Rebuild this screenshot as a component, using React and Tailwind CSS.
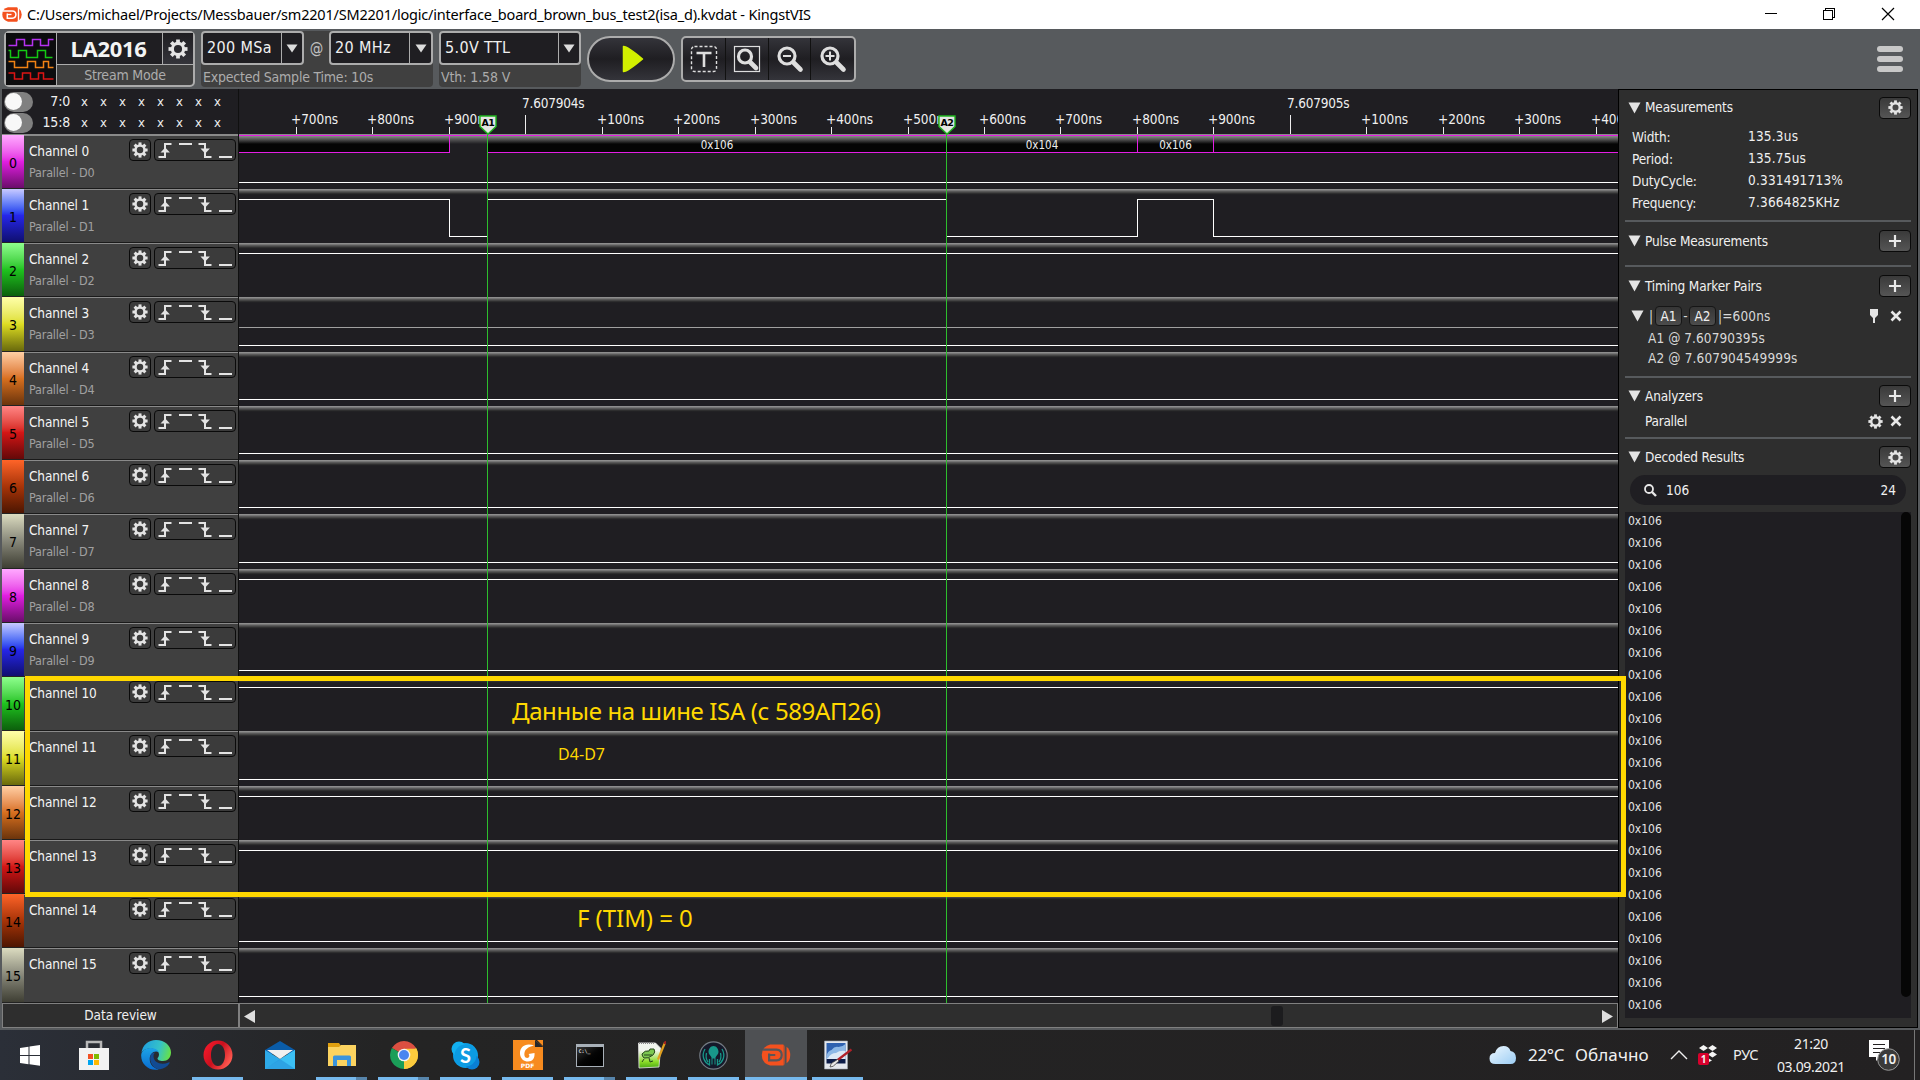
import React from "react";

const UI = "font-['DejaVu_Sans_Condensed','DejaVu_Sans',sans-serif]";

const ROWS = [
  { h: "h-[54px]", size: 54, level: "low", grad: "from-[#ffa9ff] via-[#e21ee2] to-[#6b0d6b]" },
  { h: "h-[54px]", size: 54, level: "wave", grad: "from-[#c9c9ff] via-[#2626ea] to-[#0f0f70]" },
  { h: "h-[54px]", size: 54, level: "high", grad: "from-[#8dff8d] via-[#1fc41f] to-[#0c600c]" },
  { h: "h-[55px]", size: 55, level: "mid", grad: "from-[#ffffa8] via-[#dede22] to-[#6a6a0c]" },
  { h: "h-[54px]", size: 54, level: "low", grad: "from-[#ffcfa4] via-[#d8701f] to-[#6b340c]" },
  { h: "h-[54px]", size: 54, level: "low", grad: "from-[#ff8585] via-[#d41616] to-[#640808]" },
  { h: "h-[54px]", size: 54, level: "low", grad: "from-[#ff6428] via-[#a83408] to-[#4d1602]" },
  { h: "h-[55px]", size: 55, level: "low", grad: "from-[#dcdcc0] via-[#88887a] to-[#3f3f34]" },
  { h: "h-[54px]", size: 54, level: "high", grad: "from-[#ffa9ff] via-[#e21ee2] to-[#6b0d6b]" },
  { h: "h-[54px]", size: 54, level: "low", grad: "from-[#c9c9ff] via-[#2626ea] to-[#0f0f70]" },
  { h: "h-[54px]", size: 54, level: "high", grad: "from-[#8dff8d] via-[#1fc41f] to-[#0c600c]" },
  { h: "h-[55px]", size: 55, level: "low", grad: "from-[#ffffa8] via-[#dede22] to-[#6a6a0c]" },
  { h: "h-[54px]", size: 54, level: "high", grad: "from-[#ffcfa4] via-[#d8701f] to-[#6b340c]" },
  { h: "h-[54px]", size: 54, level: "high", grad: "from-[#ff8585] via-[#d41616] to-[#640808]" },
  { h: "h-[54px]", size: 54, level: "low", grad: "from-[#ff6428] via-[#a83408] to-[#4d1602]" },
  { h: "h-[55px]", size: 55, level: "low", grad: "from-[#dcdcc0] via-[#88887a] to-[#3f3f34]" },
];

const TICKS = [
  [57, "+700ns"], [133, "+800ns"], [210, "+900ns"], [286, "7.607904s"], [363, "+100ns"], [439, "+200ns"],
  [516, "+300ns"], [592, "+400ns"], [669, "+500ns"], [745, "+600ns"], [821, "+700ns"], [898, "+800ns"],
  [974, "+900ns"], [1051, "7.607905s"], [1127, "+100ns"], [1204, "+200ns"], [1280, "+300ns"], [1357, "+400ns"],
];

function Gear({ size = 16, color = "#e4e4e4" }) {
  return (
    <svg width={size} height={size} viewBox="0 0 16 16" fill="none" stroke={color}>
      <circle cx="8" cy="8" r="4.500" strokeWidth="2.500" />
      {[0, 45, 90, 135, 180, 225, 270, 315].map((a) => (
        <path key={a} d="M8 3.2V.4" strokeWidth="3" transform={`rotate(${a} 8 8)`} />
      ))}
    </svg>
  );
}

function AppMark({ w, h, ink }) {
  return (
    <svg width={w} height={h} viewBox="0 0 20 15">
      <path d="M6 .3h9v14.400H6Q.3 13 .3 7.500T6 .3z" fill="#f4511e" />
      <path d="M15 .3q1 .7.8 2v10.400q.2 1.300-.8 2z" fill="#f4511e" />
      <path d="M1 3.900h9.300q3.600.2 3.600 3.600t-3.600 3.700H5.300V6.400" fill="none" stroke={ink} strokeWidth="1.500" />
      <path d="M5.300 7.500h4.200" stroke={ink} strokeWidth="1.300" />
      <path d="M17.200 1.800q2.500 2 2.500 5.700t-2.500 5.700z" fill="#f4511e" />
    </svg>
  );
}

function TitleBar() {
  return (
    <div className="flex h-[29px] items-center bg-white pl-[2px] text-black">
      <AppMark w={20} h={15} ink="#fff" />
      <span className="ml-[5px] grow whitespace-nowrap pt-px font-['Noto_Sans',sans-serif] text-[14.500px] tracking-[-0.210px]">
        C:/Users/michael/Projects/Messbauer/sm2201/SM2201/logic/interface_board_brown_bus_test2(isa_d).kvdat - KingstVIS
      </span>
      <svg width="160" height="29" fill="none" stroke="#000" shapeRendering="crispEdges">
        <path d="M5 13.500h12" />
        <path d="M63.500 10.500h9v9h-9zM65.500 10.500v-2h9v9h-2" />
        <path d="M122 8l12 12M134 8l-12 12" shapeRendering="auto" strokeWidth="1.200" />
      </svg>
    </div>
  );
}

function Combo({ text, className, btn }) {
  return (
    <div className={`flex h-[34px] rounded-[4px] border-2 border-[#acacac] bg-[#1f1e22] ${className}`}>
      <span className="grow self-center whitespace-nowrap pl-[4px] text-[16px] tracking-[0.350px] text-[#f0f0f0]">{text}</span>
      <span className={`flex items-center justify-center border-l border-[#acacac] ${btn}`}>
        <svg width="12" height="9"><path d="M0.500 0.500h11L6 8.500z" fill="#dcdcdc" /></svg>
      </span>
    </div>
  );
}

function Lens({ children, box }) {
  return (
    <svg width="28" height="28" viewBox="0 0 28 28" fill="none" stroke="#dedede">
      {box && <rect x="1.500" y="1.500" width="25" height="25" strokeWidth="1.200" />}
      <circle cx={box ? 12 : 11} cy={box ? 11.500 : 11} r={box ? 6.500 : 8} strokeWidth="3.200" />
      <path d={box ? "M17 17l6 6" : "M17.500 17.500l7 7"} strokeWidth="4.600" strokeLinecap="round" />
      {children}
    </svg>
  );
}

function Toolbar() {
  return (
    <div className="flex h-[60px] items-start bg-[#575a5d] pl-1 pt-[2px]">
      <div className="flex h-[56px] w-[191px] rounded-[5px] border-2 border-[#acacac] bg-[#404040]">
        <div className="w-[50px] bg-[#0c0c0e] pt-[4px]">
          <svg width="50" height="46" fill="none" strokeWidth="1.500">
            <path d="M2.500 8.500h8V2.500h8v6h8V2.500h8v6h8V2.500h5" stroke="#b432f0" />
            <path d="M2.500 13.500h2v7h8v-7h8v7h11v-7h8v7h7" stroke="#14c814" />
            <path d="M2.500 24.500h6v6h13v-6h8v6h8v-6h5v6h5" stroke="#f08214" />
            <path d="M2.500 36h6v6h8v-6h8v6h8v-6h5v6h10" stroke="#dc1414" />
          </svg>
        </div>
        <div className="flex grow flex-col border-l border-[#acacac]">
          <div className="flex h-[32px] border-b border-[#acacac] bg-[#1f1e22]">
            <span className="flex w-[105px] items-center justify-center pr-[2px] font-['Noto_Sans',sans-serif] text-[22px] font-bold tracking-[-0.300px] text-[#f4f4f4]">LA2016</span>
            <span className="flex grow items-center justify-center border-l border-[#acacac] bg-linear-to-b from-[#1f1e22] to-[#34343a]">
              <Gear size={20} />
            </span>
          </div>
          <span className="flex h-[20px] items-center justify-center pt-px text-[14px] tracking-[-0.200px] text-[#acacac]">Stream Mode</span>
        </div>
      </div>
      <div className="ml-[6px] h-[56px] w-[232px] rounded-[4px] bg-[#404040]">
        <div className="flex">
          <Combo text="200 MSa" className="w-[103px]" btn="w-[21px]" />
          <span className="w-[25px] self-center text-center text-[15px] text-[#c0c0c0]">@</span>
          <Combo text="20 MHz" className="w-[104px]" btn="w-[22px]" />
        </div>
        <div className="whitespace-nowrap pl-[2px] pt-[2px] text-[14px] tracking-[-0.220px] text-[#acacac]">Expected Sample Time: 10s</div>
      </div>
      <div className="ml-[6px] h-[56px] w-[142px] rounded-[4px] bg-[#404040]">
        <Combo text="5.0V TTL" className="w-[142px]" btn="w-[21px]" />
        <div className="pl-[2px] pt-[2px] text-[14px] tracking-[-0.100px] text-[#acacac]">Vth: 1.58 V</div>
      </div>
      <div className="ml-[6px] mt-[5px] flex h-[46px] w-[88px] items-center justify-center rounded-full border-2 border-[#acacac] bg-linear-to-b from-[#34343a] via-[#1f1e22] to-[#34343a] pl-[3px]">
        <svg width="22" height="28"><path d="M1.500 1.500Q5 1 20.500 14Q5 27 1.500 26.500z" fill="#d2f000" stroke="#d2f000" strokeWidth="1.500" strokeLinejoin="round" /></svg>
      </div>
      <div className="ml-[6px] mt-[5px] grid h-[46px] w-[175px] grid-cols-4 place-items-center rounded-[5px] border-2 border-[#acacac] bg-linear-to-b from-[#34343a] via-[#1f1e22] to-[#34343a]">
        <div className="flex h-full w-full items-center justify-center border-r border-[#111]">
          <svg width="28" height="28" fill="none" stroke="#dedede">
            <rect x="1.500" y="1.500" width="25" height="25" rx="3" strokeWidth="1.400" strokeDasharray="3 2" />
            <path d="M6.500 8h15M14 8v14" strokeWidth="2.600" />
          </svg>
        </div>
        <div className="flex h-full w-full items-center justify-center border-r border-[#111]"><Lens box /></div>
        <div className="flex h-full w-full items-center justify-center border-r border-[#111] pl-px"><Lens><path d="M7 11h8" strokeWidth="2" /></Lens></div>
        <Lens><path d="M6.500 11h9M11 6.500v9" strokeWidth="2" /></Lens>
      </div>
      <div className="ml-auto mr-[17px] mt-[15px] flex flex-col gap-1">
        <i className="h-[6px] w-[26px] rounded-full bg-[#c8c8c8]" />
        <i className="h-[6px] w-[26px] rounded-full bg-[#c8c8c8]" />
        <i className="h-[6px] w-[26px] rounded-full bg-[#c8c8c8]" />
      </div>
    </div>
  );
}

function BitRow({ label }) {
  return (
    <div className="flex h-[21px] items-center">
      <span className="flex h-[20px] w-[29px] items-center rounded-full bg-[#808080] pl-[1px]">
        <i className="size-[17px] rounded-full bg-[#f8f8f8]" />
      </span>
      <span className="w-[37px] text-right text-[14px] tracking-[-0.200px]">{label}</span>
      <span className="ml-[5px] flex">
        {Array.from({ length: 8 }, (_, i) => (
          <span key={i} className="w-[19px] pb-px text-center text-[13px] leading-none">x</span>
        ))}
      </span>
    </div>
  );
}

function EdgeButtons() {
  return (
    <div className="ml-[3px] h-[22px] w-[82px] rounded-[4px] border border-[#0a0a0a] bg-[#3b3b3b]">
      <svg width="80" height="20" fill="none" stroke="#e4e4e4" strokeWidth="2">
        <path d="M3.500 17h6.500V4h6.500" />
        <path d="M5.500 12.500l4.700-5 4.700 5z" fill="#e4e4e4" stroke="none" />
        <path d="M24 4h13" />
        <path d="M43.500 4h6.500v13h6.500" />
        <path d="M45.500 8.500l4.700 5 4.700-5z" fill="#e4e4e4" stroke="none" />
        <path d="M64 17h13" />
      </svg>
    </div>
  );
}

function ChannelRow({ i, row }) {
  return (
    <div className={`flex ${row.h}`}>
      <div className={`flex w-[22px] items-center justify-center border-b border-[#222] bg-linear-to-b pt-[3px] text-[14px] text-black ${row.grad}`}>{i}</div>
      <div className="flex grow border-b border-t border-b-[#1a1a1a] border-t-[#8a8a8a] bg-[#404040] pl-[5px]">
        <div className="w-[100px] whitespace-nowrap pt-[5px]">
          <div className="h-[22px] text-[13.500px] leading-[20px] tracking-[-0.150px] text-[#f4f4f4]">Channel {i}</div>
          {i < 10 && <div className="text-[12.500px] leading-[20px] tracking-[-0.200px] text-[#a0a0a0]">Parallel - D{i}</div>}
        </div>
        <div className="flex pt-[3px]">
          <div className="flex size-[22px] items-center justify-center rounded-[4px] border border-[#0a0a0a] bg-[#3b3b3b]"><Gear size={16} /></div>
          <EdgeButtons />
        </div>
      </div>
    </div>
  );
}

function Lane({ i, row }) {
  const low = row.size - 6.5;
  const paths = {
    low: `M0 ${low}H1380`,
    mid: `M0 ${low}H1380`,
    high: "M0 10.500H1380",
    wave: "M0 10.500H210.500V47.500H248M248 10.500H707M707 47.500H898.500V10.500H974.500V47.500H1380",
  };
  return (
    <div className={`relative ${row.h} bg-[linear-gradient(#909090_0px,#8a8a8a_1px,#606060_2px,#505050_3px,#383838_4px,#242426_5px,#1f1e22_6px)]`}>
      {i === 0 && (
        <div className="absolute inset-x-0 top-0 flex h-[18px] bg-[#1f1e22] text-[11.500px] leading-[18px] text-[#eee]">
          <span className="w-[211px] border-y border-r border-[#e41ee4] bg-[linear-gradient(#8a8a8a,#5a5a5a_3px,#050505_8px)]" />
          <span className="w-[37px] border-t border-[#e41ee4] bg-[linear-gradient(#8a8a8a,#5a5a5a_3px,#1f1e22_8px)]" />
          <span className="w-[651px] border-y border-r border-[#e41ee4] bg-[linear-gradient(#8a8a8a,#5a5a5a_3px,#050505_8px)]">
            <span className="flex">
              <span className="w-[460px] text-center">0x106</span>
              <span className="grow text-center">0x104</span>
            </span>
          </span>
          <span className="w-[76px] border-y border-r border-[#e41ee4] bg-[linear-gradient(#8a8a8a,#5a5a5a_3px,#050505_8px)] text-center">0x106</span>
          <span className="grow border-y border-[#e41ee4] bg-[linear-gradient(#8a8a8a,#5a5a5a_3px,#050505_8px)]" />
        </div>
      )}
      <svg width="1379" height={row.size} className="block" fill="none" stroke="#fff" shapeRendering="crispEdges">
        <path d={paths[row.level]} />
        {row.level === "mid" && <path d="M0 30.500H1380" stroke="#a0a0a0" />}
      </svg>
    </div>
  );
}

function Marker({ label, pos }) {
  return (
    <div className={`absolute bottom-0 top-[26px] w-[18px] ${pos}`}>
      <svg width="18" height="20" className="block">
        <path d="M1 1h16v10.500L9 19 1 11.500z" fill="#e4e4e4" stroke="#1eb41e" strokeWidth="1.400" />
      </svg>
      <span className="absolute inset-x-0 top-[1px] text-center font-['DejaVu_Sans',sans-serif] text-[9.500px] font-bold leading-[13px] tracking-[-0.500px] text-black">{label}</span>
      <div className="absolute bottom-0 left-[8px] top-[19px] w-px bg-[#2dbe2d]" />
    </div>
  );
}

function Waves() {
  return (
    <div className="relative w-[1379px] bg-[#1f1e22]">
      <div className="relative h-[46px] overflow-hidden border-b border-[#8a8a8a]">
        {TICKS.map(([x, t]) => {
          const major = t.endsWith("4s") || t.endsWith("5s");
          return (
            <div key={x} className="absolute inset-y-0 w-[80px] whitespace-nowrap text-[13.500px] leading-[18px] text-[#f0f0f0]" style={{ left: x }}>
              <span className={major ? "absolute left-[-3px] top-[5px] tracking-[-0.200px]" : "absolute left-[-5px] top-[21px] tracking-[-0.050px]"}>{t}</span>
              <i className={major ? "absolute bottom-0 left-0 h-[19px] w-px bg-[#eee]" : "absolute bottom-0 left-0 h-[7px] w-px bg-[#eee]"} />
            </div>
          );
        })}
      </div>
      {ROWS.map((r, i) => <Lane key={i} i={i} row={r} />)}
      <Marker label="A1" pos="left-[240px]" />
      <Marker label="A2" pos="left-[699px]" />
    </div>
  );
}

const Plus = () => (
  <svg width="14" height="14"><path d="M7 1v12M1 7h12" stroke="#e8e8e8" strokeWidth="2.200" /></svg>
);
const Cross = () => (
  <svg width="12" height="12"><path d="M1.500 1.500l9 9M10.500 1.500l-9 9" stroke="#e8e8e8" strokeWidth="2.600" /></svg>
);

function Head({ title, gear, h }) {
  return (
    <div className={`flex items-center pl-[3px] ${h}`}>
      <svg width="13" height="12"><path d="M.5.5h12l-6 11z" fill="#e4e4e4" /></svg>
      <span className="grow pl-[4px] text-[13.500px] tracking-[-0.150px] text-[#f0f0f0]">{title}</span>
      <span className="flex h-[22px] w-[32px] items-center justify-center rounded-[4px] border border-[#0a0a0a] bg-linear-to-b from-[#3a3a3a] to-[#555]">
        {gear ? <Gear size={15} /> : <Plus />}
      </span>
    </div>
  );
}

const Rule = () => <div className="h-[2px] shrink-0 bg-[#575a5d]" />;

function Chip({ children }) {
  return <span className="flex h-[20px] w-[27px] items-center justify-center rounded-[4px] border border-[#161616] bg-linear-to-b from-[#363636] to-[#4c4c4c] text-[#f0f0f0]">{children}</span>;
}

function SidePanel() {
  return (
    <div className="flex h-[939px] w-[300px] flex-col border border-black bg-[#2e2e2e] pl-[6px] pr-[6px] text-[13.500px] text-[#f0f0f0]">
      <Head title="Measurements" gear h="h-[35px]" />
      <div className="flex h-[95px] flex-col pl-[7px]">
        {[["Width:", "135.3us"], ["Period:", "135.75us"], ["DutyCycle:", "0.331491713%"], ["Frequency:", "7.3664825KHz"]].map(([a, b]) => (
          <div key={a} className="flex h-[22px] items-center">
            <span className="w-[116px] pt-[2px] tracking-[-0.150px]">{a}</span>
            <span className="tracking-[0.200px]">{b}</span>
          </div>
        ))}
      </div>
      <Rule />
      <div className="h-[43px]"><Head title="Pulse Measurements" h="h-[38px]" /></div>
      <Rule />
      <div className="h-[109px] text-[#d8d8d8]">
        <Head title="Timing Marker Pairs" h="h-[38px]" />
        <div className="flex h-[22px] items-center pl-[6px]">
          <svg width="13" height="12"><path d="M.5.5h12l-6 11z" fill="#e4e4e4" /></svg>
          <span className="w-[5px]" /><span className="w-[6px]">|</span>
          <Chip>A1</Chip><span className="w-[7px] text-center">-</span><Chip>A2</Chip>
          <span className="grow pl-[2px] tracking-[0.150px]">|=600ns</span>
          <svg width="10" height="14" className="mr-[11px]"><path d="M1 0h8v6L6 9v5H4V9L1 6z" fill="#e4e4e4" /></svg>
          <span className="pr-[9px]"><Cross /></span>
        </div>
        <div className="flex h-[22px] items-center pl-[23px] tracking-[0.080px]">A1 @ 7.60790395s</div>
        <div className="flex h-[19px] items-center pl-[23px] tracking-[0.150px]">A2 @ 7.607904549999s</div>
      </div>
      <Rule />
      <div className="h-[59px]">
        <Head title="Analyzers" h="h-[36px]" />
        <div className="flex h-[14px] items-center pl-[20px]">
          <span className="grow tracking-[-0.250px]">Parallel</span>
          <Gear size={15} /><span className="pl-[7px] pr-[9px]"><Cross /></span>
        </div>
      </div>
      <Rule />
      <Head title="Decoded Results" gear h="h-[36px]" />
      <div className="ml-[5px] mr-[5px] flex h-[30px] items-center rounded-full bg-[#1f1e22] pl-[14px] pr-[10px]">
        <svg width="13" height="13" fill="none" stroke="#e8e8e8"><circle cx="5" cy="5" r="4" strokeWidth="1.800" /><path d="M8 8l4 4" strokeWidth="2.400" /></svg>
        <span className="grow pl-[9px] pt-px">106</span><span>24</span>
      </div>
      <div className="mt-[7px] flex h-[506px] justify-between overflow-hidden bg-[#1f1e22] pl-[3px]">
        <div className="-mt-[2px] text-[12px] leading-[22px] text-[#e4e4e4]">
          {Array.from({ length: 23 }, (_, i) => <div key={i} className="h-[22px]">0x106</div>)}
        </div>
        <i className="h-[485px] w-[10px] rounded-full bg-[#060606]" />
      </div>
    </div>
  );
}

const ICONS = {
  store: (
    <svg width="30" height="30"><path d="M8 9V2h14v7" fill="none" stroke="#b8b8b8" strokeWidth="2.500" /><path d="M0 8h30v22H0z" fill="#f2f2f2" />
      <path d="M9 14h5v5H9z" fill="#f25022" /><path d="M15 14h5v5h-5z" fill="#7fba00" /><path d="M9 20h5v5H9z" fill="#00a4ef" /><path d="M15 20h5v5h-5z" fill="#ffb900" /></svg>
  ),
  edge: (
    <svg width="30" height="30" viewBox="0 0 30 30">
      <defs><linearGradient id="eg" x1="0" y1=".3" x2="1" y2=".5"><stop offset="0" stopColor="#1f9fe0" /><stop offset=".6" stopColor="#35c2c8" /><stop offset="1" stopColor="#66e04a" /></linearGradient>
        <linearGradient id="eb" x1="0" y1="0" x2="0" y2="1"><stop offset="0" stopColor="#1ca4e8" /><stop offset="1" stopColor="#0a6cd0" /></linearGradient></defs>
      <path d="M.4 13C1.500 5 7.500 0 15 0c9 0 15 6 15 12.500 0 5-3.500 8.500-8 8.500-4 0-5.500-1.600-5.500-2.600 0-.9 1.500-1.400 1.500-4C18 11 14 8.500 9.500 8.500 5 8.500 1.500 10.500.4 13z" fill="url(#eg)" />
      <path d="M.2 15C.5 11 4.500 8 9.500 8c4 0 7 1.500 8.200 4-5-2-9 2-9 7 0 6 4.500 9.500 9.300 10.500C7.500 31.500-.3 24 .2 15z" fill="url(#eb)" />
      <path d="M9.500 15.500c-2 7 4 14.300 9.500 13.800 4-.4 7.600-3 9.500-6 .5-.9-.2-1.200-1-.8-7 3-15 .5-15-6.500 0-2 1-3 1.800-3.500-2.300 0-4.200 1-4.800 3z" fill="#124b93" />
    </svg>
  ),
  opera: (
    <svg width="30" height="30"><defs><linearGradient id="op" x1="0" y1="0" x2="1" y2=".6"><stop offset="0" stopColor="#ff1b2d" /><stop offset=".55" stopColor="#c8101e" /><stop offset="1" stopColor="#ff5a50" /></linearGradient></defs>
      <path fillRule="evenodd" d="M15 .5a14.500 14.500 0 1 1 0 29 14.500 14.500 0 0 1 0-29zM15 4c-4.500 0-7 5-7 11s2.500 11 7 11 7-5 7-11-2.500-11-7-11z" fill="url(#op)" /></svg>
  ),
  mail: (
    <svg width="30" height="28"><path d="M0 9l15-9 15 9v4H0z" fill="#0a5ca8" /><path d="M0 9l15 9L30 9v19H0z" fill="#2eaae8" /><path d="M2 9h26L15 18z" fill="#f0f0f0" /><path d="M0 28L30 9v19z" fill="#3cc0f4" /><path d="M0 28l15-10 15 10z" fill="#1d86d4" opacity=".5" /></svg>
  ),
  folder: (
    <svg width="28" height="24"><path d="M0 0h11l2 3h14v3H0z" fill="#e0a010" /><path d="M0 4h11l2-2h15v21H0z" fill="#fbd360" /><path d="M5 23v-9q0-1.500 1.500-1.500h15q1.500 0 1.500 1.500v9h-4v-6H9v6z" fill="#3a94dc" /></svg>
  ),
  chrome: (
    <svg width="28" height="28" viewBox="0 0 28 28"><path d="M14 14L1.880 7A14 14 0 0 1 26.120 7z" fill="#db4f41" /><path d="M14 14L26.120 7A14 14 0 0 1 14 28z" fill="#fccb3d" /><path d="M14 14v14A14 14 0 0 1 1.880 7z" fill="#1b9e58" /><path d="M14 7.700h12.500A14 14 0 0 1 14 28l5.500-10.800z" fill="#fccb3d" /><circle cx="14" cy="14" r="6.300" fill="#f4f4f4" /><circle cx="14" cy="14" r="5" fill="#4a86f0" /></svg>
  ),
  skype: (
    <span className="relative flex size-[29px] items-center justify-center">
      <svg width="29" height="29" className="absolute"><circle cx="14.500" cy="14.500" r="12.500" fill="#0c9fe6" /><circle cx="8" cy="8" r="7.500" fill="#12b0f0" /><circle cx="21" cy="21" r="7.500" fill="#0a7fd4" /><circle cx="14.500" cy="14.500" r="11" fill="#0c9be2" /></svg>
      <b className="relative font-['Lato',sans-serif] text-[20px] leading-none text-white">S</b>
    </span>
  ),
  foxit: (
    <span className="relative flex size-[30px] items-end justify-center">
      <svg width="30" height="30" className="absolute inset-0"><path d="M0 0h22l8 7v23H0z" fill="#f78b1f" /><path d="M22 0v7h8z" fill="#26272a" /><path d="M24 0l6 6V0z" fill="#f78b1f" />
        <path d="M21 5.500c-8-3-14.500 1-14 8.500.5 5 4 7.500 8 7.500 4.500 0 7-3.500 6.500-8.500l-6 1c1.500 1 1 4-1.200 4-2.800 0-3.500-3.500-2.500-6.500 1-2.800 4.700-5 9.200-6z" fill="#fff" /></svg>
      <b className="relative font-['DejaVu_Sans',sans-serif] text-[6px] leading-[8px] text-white">PDF</b>
    </span>
  ),
  term: (
    <span className="flex h-[23px] w-[28px] flex-col border border-[#a8b0b8] border-t-[3px] bg-linear-to-br from-[#3a3a3a] via-[#050505] to-black pl-[2px] font-['DejaVu_Sans_Mono',monospace] text-[5px] font-bold leading-[8px] text-[#ddd]">C:\_</span>
  ),
  npp: (
    <svg width="28" height="28"><defs><linearGradient id="np" x1="0" y1="0" x2="0" y2="1"><stop offset=".3" stopColor="#f2f6ee" /><stop offset=".75" stopColor="#8cdc28" /><stop offset="1" stopColor="#4aa814" /></linearGradient></defs>
      <path d="M.5 2h17l5 5L21 26 1 27z" fill="url(#np)" stroke="#e8e8e8" strokeWidth=".8" /><path d="M1 2h16" stroke="#888" strokeDasharray="1 1" strokeWidth="2" />
      <path d="M4 13q3-4 7-3l1-2 4 0q2 3-1 6-5 4-9 3-2-2-2-4zM6 18l-2 3M11 17l1 4 3-1M6 14h8" fill="#7cc850" stroke="#26461a" strokeWidth="1" /><path d="M27 1.500l-7 17" stroke="#e0a020" strokeWidth="2.200" /><path d="M28 0l-1.500 3" stroke="#a02020" strokeWidth="2.200" /></svg>
  ),
  kraken: (
    <svg width="29" height="29" fill="none"><circle cx="14.500" cy="14.500" r="13.700" fill="#15192a" stroke="#747c84" strokeWidth="1.200" /><path d="M14.500 5c-3 0-5 3-5 6 0 2 2 3.500 3 5.500v7h1v-6h2v6h1v-7c1-2 3-3.500 3-5.500 0-3-2-6-5-6z" fill="#18988a" /><path d="M6 8c-4 7-1 13 4.500 16V18M23 8c4 7 1 13-4.500 16V18M7.500 12c-1 4 0 7 1.500 9M21.500 12c1 4 0 7-1.500 9" stroke="#18988a" strokeWidth="1.300" /></svg>
  ),
  king: <AppMark w={30} h={22} ink="#55565a" />,
  paint: (
    <svg width="28" height="30"><path d="M.5 1h23v28H.5z" fill="#e4e8ee" stroke="#9aa2ac" strokeWidth=".6" /><path d="M2.500 3h19v16h-19z" fill="#2f62b0" />
      <path d="M2.500 16q1-5 5-6 3-4 7-3 4 0 7-3v15h-19z" fill="#8db8e6" /><path d="M4 18q3-5 8-5 4-3 9.500-2v8h-19z" fill="#dce9f6" /><path d="M2.500 19h19v4.500h-19z" fill="#0c1c48" />
      <path d="M27.500 9.500L13 20.500" stroke="#b02028" strokeWidth="2.200" /><path d="M13.500 19.500l-4 2.500q-3 1-3.500 5 4 0 5.500-3l3.500-3z" fill="#e8e8e8" stroke="#444" strokeWidth=".8" /></svg>
  ),
};

const TASKS = [
  ["store", 0], ["edge", 0], ["opera", 1], ["mail", 0], ["folder", 2], ["chrome", 2], ["skype", 1],
  ["foxit", 1], ["term", 2], ["npp", 1], ["kraken", 1], ["king", 3], ["paint", 1],
];

function Taskbar() {
  return (
    <div className="flex h-[50px] bg-linear-to-r from-[#2b2f38] via-[#242424] via-20% to-[#232122] font-['Noto_Sans',sans-serif] text-[#f0f0f0]">
      <div className="flex w-[62.500px] items-center pl-[20px]">
        <svg width="20" height="21" fill="#fff"><path d="M0 3l8.500-1.200V10H0zM9.500 1.600L20 0v10H9.500zM0 11h8.500v8.200L0 18zM9.500 11H20v9.800l-10.500-1.500z" /></svg>
      </div>
      {TASKS.map(([n, s]) => (
        <div key={n} className={s === 3 ? "flex w-[62px] flex-col items-center bg-[#4e5053]" : "flex w-[62px] flex-col items-center"}>
          <div className="flex h-[47px] items-center pt-[3px]">{ICONS[n]}</div>
          {s === 1 && <i className="h-[3px] w-[51px] bg-[#76b9ed]" />}
          {s === 2 && <span className="flex"><i className="h-[3px] w-[40px] bg-[#76b9ed]" /><i className="h-[3px] w-[11px] bg-[#5785ab]" /></span>}
          {s === 3 && <i className="h-[3px] w-full bg-[#76b9ed]" />}
        </div>
      ))}
      <div className="ml-auto flex items-center">
        <svg width="28" height="20"><defs><linearGradient id="cl" x1="0" y1="0" x2="1" y2="1"><stop offset="0" stopColor="#eef8ff" /><stop offset="1" stopColor="#9ccdf4" /></linearGradient></defs>
          <path d="M6.500 19Q.5 19 .5 13.500T6 8Q8 1 14.500 1 20 1 21.500 6 27 7 27 13t-5.500 6z" fill="url(#cl)" /></svg>
        <span className="ml-[11px] w-[47px] whitespace-nowrap text-[17px] tracking-[-0.300px]">22°C</span>
        <span className="w-[95px] whitespace-nowrap text-[17px] tracking-[0.100px]">Облачно</span>
        <svg width="18" height="12" fill="none" stroke="#f0f0f0" strokeWidth="1.400"><path d="M1 10l8-8 8 8" /></svg>
        <span className="relative ml-[10px] h-[20px] w-[20px]">
          <svg width="20" height="20" fill="#f4f4f4"><path d="M5.500 0L10 3 5.500 6 1 3zM14.500 0L19 3l-4.500 3L10 3zM14.500 6.500L19 9.500l-4.500 3-4.500-3zM10 13l4 2.500-4 2z" /></svg>
          <b className="absolute left-0 top-[8px] flex h-[12px] w-[11px] items-center justify-center rounded-[2px] bg-[#d8002c] text-[10px] leading-none">1</b>
        </span>
        <span className="ml-[15px] w-[42px] text-[14.500px] tracking-[-0.300px]">РУС</span>
        <span className="w-[72px] whitespace-nowrap text-center text-[14px] leading-[23px] tracking-[-0.350px]">21:20<br />03.09.2021</span>
        <span className="relative ml-[22px] h-[30px] w-[33px]">
          <svg width="32" height="31"><path d="M0 0h20v17h-9l-4 4v-4H0z" fill="#fff" /><path d="M4 4.500h12M4 8.500h12M4 12.500h8" stroke="#232122" strokeWidth="1.200" /><circle cx="19.500" cy="19.500" r="10.800" fill="#3a3a3a" stroke="#999" /></svg>
          <span className="absolute left-[9px] top-[9px] w-[21px] text-center text-[13.500px] font-semibold leading-[21px] tracking-[-0.500px]">10</span>
        </span>
        <i className="ml-[12px] mr-[5px] h-[50px] w-px bg-[#777]" />
      </div>
    </div>
  );
}

export default function App() {
  return (
    <div className={`relative h-[1080px] w-[1920px] overflow-hidden bg-[#575a5d] text-[#f0f0f0] ${UI}`}>
      <TitleBar />
      <Toolbar />
      <div className="flex h-[941px] pl-[2px]">
        <div>
          <div className="flex">
            <div className="w-[236px] bg-[#1f1e22]">
              <div className="flex h-[46px] flex-col border-b border-[#8a8a8a] pl-[2px] pt-[2px]">
                <BitRow label="7:0" />
                <BitRow label="15:8" />
              </div>
              {ROWS.map((r, i) => <ChannelRow key={i} i={i} row={r} />)}
            </div>
            <div className="w-px bg-[#101010]" />
            <Waves />
          </div>
          <div className="flex h-[25px]">
            <div className="flex w-[237px] items-center justify-center border border-[#808080] bg-[#2e2e2e] text-[13.500px] tracking-[-0.050px]">Data review</div>
            <div className="flex grow items-center justify-between border border-[#808080] bg-[#2e2e2e] px-[4px] pt-px">
              <svg width="11" height="13"><path d="M11 0v13L0 6.500z" fill="#dedede" /></svg>
              <i className="ml-auto mr-[319px] h-[20px] w-[12px] rounded-[3px] bg-[#1c1c1e]" />
              <svg width="11" height="13"><path d="M0 0v13l11-6.500z" fill="#dedede" /></svg>
            </div>
          </div>
        </div>
        <SidePanel />
      </div>
      <Taskbar />
      <div className="absolute left-[25px] top-[676px] h-[221px] w-[1601px] border-[5px] border-[#ffd800]" />
      <div className="absolute left-[512px] top-[694px] whitespace-nowrap font-['Noto_Sans',sans-serif] text-[24px] leading-[34px] tracking-[-0.370px] text-[#ffd800]">Данные на шине ISA (с 589АП26)</div>
      <div className="absolute left-[558px] top-[743px] whitespace-nowrap font-['Noto_Sans',sans-serif] text-[16px] leading-[22px] tracking-[0.050px] text-[#ffd800]">D4-D7</div>
      <div className="absolute left-[577px] top-[901px] whitespace-nowrap font-['Noto_Sans',sans-serif] text-[24px] leading-[34px] tracking-[-0.050px] text-[#ffd800]">F (TIM) = 0</div>
    </div>
  );
}
